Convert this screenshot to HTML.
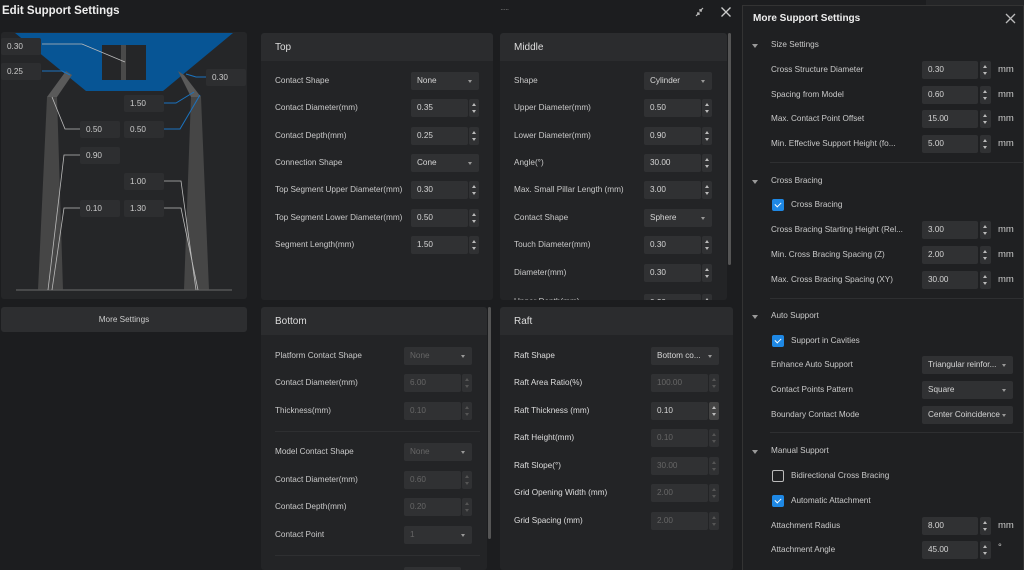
<!DOCTYPE html>
<html><head><meta charset="utf-8"><style>
*{margin:0;padding:0;box-sizing:border-box}
html{width:1024px;height:570px;overflow:hidden;background:#1c1d1f}
body{width:1024px;height:570px;background:#1c1d1f;font-family:"Liberation Sans",sans-serif;color:#c9c9c9;position:relative;overflow:hidden;font-size:8.2px}
div,span{position:absolute}
.p{background:#232426;border-radius:3px;overflow:hidden}
.h{background:#2b2c2e;border-radius:3px 3px 0 0;height:28px;left:0;right:0;top:0;font-size:10px;color:#ddd;padding:9px 0 0 14px}
.l{line-height:12px;white-space:nowrap}
.i{background:#303133;height:18px;border-radius:2px;padding:4px 0 0 6px;color:#d6d6d6;line-height:10px}
.s{background:#303133;height:18px;width:10px;border-radius:2px}
.s:before{content:"";position:absolute;left:3px;top:4px;border:2px solid transparent;border-bottom:3px solid #bbb;border-top:0}
.s:after{content:"";position:absolute;left:3px;top:11px;border:2px solid transparent;border-top:3px solid #bbb;border-bottom:0}
.d{background:#303133;height:18px;border-radius:2px;padding:4px 0 0 6px;color:#d6d6d6;line-height:10px}
.d:after{content:"";position:absolute;right:7px;top:8px;border:2.5px solid transparent;border-top:3px solid #999;border-bottom:0}
.x{color:#666}.x.s:before{border-bottom-color:#555}.x.s:after{border-top-color:#555}
.sep{height:1px;background:#2e2f31}
.cb{width:12px;height:12px;border-radius:2px;background:#1e88e5}
.cb:after{content:"";position:absolute;left:3px;top:3px;width:5px;height:3px;border-left:1.5px solid #fff;border-bottom:1.5px solid #fff;transform:rotate(-45deg)}
.cu{width:12px;height:12px;border-radius:2px;border:1.3px solid #bbb}
.ar{width:0;height:0;border:3px solid transparent;border-top:4px solid #999;border-bottom:0}
.mm{color:#ccc;font-size:9.5px}
.b{background:#2d2e30;border-radius:2px;width:40px;height:17px;color:#ccc;font-size:8.2px;padding:4px 0 0 6px;line-height:10px}
</style></head><body>
<div style="left:2px;top:5px;font-size:11.5px;font-weight:bold;color:#eee">Edit Support Settings</div>
<div style="left:500px;top:5px;color:#777;font-size:8px;letter-spacing:-1px">·····</div>
<svg style="position:absolute;left:694px;top:6px" width="14" height="12"><path d="M9 2 L6 5 M6 3 V5 H8 M2 10 L5 7 M3 7 H5 V9" stroke="#bbb" stroke-width="1.2" fill="none"/></svg>
<svg style="position:absolute;left:720px;top:6px" width="12" height="12"><path d="M1.5 1.5 L10.5 10.5 M10.5 1.5 L1.5 10.5" stroke="#ccc" stroke-width="1.3"/></svg>

<div class="p" style="left:1px;top:32px;width:246px;height:267px;background:#252628"></div>
<svg style="position:absolute;left:0;top:0" width="250" height="300">
<polygon points="15,33 233,33 163,91 86,91" fill="#075595"/>
<rect x="102" y="45" width="44" height="35" fill="#252628"/>
<rect x="121" y="45" width="5" height="35" fill="#4a4a4a"/>
<polygon points="47,97 57,97 63,290 38,290" fill="#464646"/>
<polygon points="47,97 57,97 72,75 66,71" fill="#5a5a5a"/>
<polygon points="191,97 201,97 209,290 184,290" fill="#464646"/>
<polygon points="191,97 201,97 184,75 178,71" fill="#5a5a5a"/>
<line x1="16" y1="290" x2="232" y2="290" stroke="#555" stroke-width="1.5"/>
<g stroke="#1a73c0" fill="none" stroke-width="1">
<path d="M42 71 H62 L70 75"/><path d="M206 77 H196 L186 74"/><path d="M164 103 H176 L194 92"/><path d="M164 129 H180 L200 95"/>
</g>
<g stroke="#bbb" fill="none" stroke-width="0.8">
<path d="M42 44 H82 L125 62"/><path d="M80 129 H65 L52 97"/><path d="M80 155 H64 L48 290"/><path d="M80 208 H64 L52 290"/><path d="M164 181 H181 L196 290"/><path d="M164 208 H181 L198 290"/>
</g>
</svg>
<div class="b" style="left:1px;top:38px">0.30</div>
<div class="b" style="left:1px;top:63px">0.25</div>
<div class="b" style="left:206px;top:69px">0.30</div>
<div class="b" style="left:124px;top:95px">1.50</div>
<div class="b" style="left:80px;top:121px">0.50</div>
<div class="b" style="left:124px;top:121px">0.50</div>
<div class="b" style="left:80px;top:147px">0.90</div>
<div class="b" style="left:124px;top:173px">1.00</div>
<div class="b" style="left:80px;top:200px">0.10</div>
<div class="b" style="left:124px;top:200px">1.30</div>
<div style="left:1px;top:307px;width:246px;height:25px;background:#2d2e30;border-radius:3px;text-align:center;padding-top:8px;color:#ccc">More Settings</div>

<div class="p" style="left:261px;top:33px;width:232px;height:267px"><div class="h">Top</div></div>
<div class="l" style="left:275px;top:75px">Contact Shape</div><div class="d" style="left:411px;top:72px;width:68px">None</div>
<div class="l" style="left:275px;top:102px">Contact Diameter(mm)</div><div class="i" style="left:411px;top:99px;width:57px">0.35</div><div class="s" style="left:469px;top:99px"></div>
<div class="l" style="left:275px;top:130px">Contact Depth(mm)</div><div class="i" style="left:411px;top:127px;width:57px">0.25</div><div class="s" style="left:469px;top:127px"></div>
<div class="l" style="left:275px;top:157px">Connection Shape</div><div class="d" style="left:411px;top:154px;width:68px">Cone</div>
<div class="l" style="left:275px;top:184px">Top Segment Upper Diameter(mm)</div><div class="i" style="left:411px;top:181px;width:57px">0.30</div><div class="s" style="left:469px;top:181px"></div>
<div class="l" style="left:275px;top:212px">Top Segment Lower Diameter(mm)</div><div class="i" style="left:411px;top:209px;width:57px">0.50</div><div class="s" style="left:469px;top:209px"></div>
<div class="l" style="left:275px;top:239px">Segment Length(mm)</div><div class="i" style="left:411px;top:236px;width:57px">1.50</div><div class="s" style="left:469px;top:236px"></div>

<div class="p" style="left:500px;top:33px;width:227px;height:267px"><div class="h">Middle</div>
<div class="l" style="left:14px;top:263px">Upper Depth(mm)</div><div class="i" style="left:144px;top:261px;width:57px">0.20</div><div class="s" style="left:202px;top:261px"></div></div>
<div style="left:728px;top:33px;width:3px;height:232px;background:#555;border-radius:2px"></div>
<div class="l" style="left:514px;top:75px">Shape</div><div class="d" style="left:644px;top:72px;width:68px">Cylinder</div>
<div class="l" style="left:514px;top:102px">Upper Diameter(mm)</div><div class="i" style="left:644px;top:99px;width:57px">0.50</div><div class="s" style="left:702px;top:99px"></div>
<div class="l" style="left:514px;top:130px">Lower Diameter(mm)</div><div class="i" style="left:644px;top:127px;width:57px">0.90</div><div class="s" style="left:702px;top:127px"></div>
<div class="l" style="left:514px;top:157px">Angle(°)</div><div class="i" style="left:644px;top:154px;width:57px">30.00</div><div class="s" style="left:702px;top:154px"></div>
<div class="l" style="left:514px;top:184px">Max. Small Pillar Length (mm)</div><div class="i" style="left:644px;top:181px;width:57px">3.00</div><div class="s" style="left:702px;top:181px"></div>
<div class="l" style="left:514px;top:212px">Contact Shape</div><div class="d" style="left:644px;top:209px;width:68px">Sphere</div>
<div class="l" style="left:514px;top:239px">Touch Diameter(mm)</div><div class="i" style="left:644px;top:236px;width:57px">0.30</div><div class="s" style="left:702px;top:236px"></div>
<div class="l" style="left:514px;top:267px">Diameter(mm)</div><div class="i" style="left:644px;top:264px;width:57px">0.30</div><div class="s" style="left:702px;top:264px"></div>

<div class="p" style="left:261px;top:307px;width:226px;height:263px"><div class="h">Bottom</div>
<div class="i x" style="left:143px;top:260px;width:57px"></div></div>
<div style="left:488px;top:307px;width:3px;height:232px;background:#555;border-radius:2px"></div>
<div class="l" style="left:275px;top:350px">Platform Contact Shape</div><div class="d x" style="left:404px;top:347px;width:68px">None</div>
<div class="l" style="left:275px;top:377px">Contact Diameter(mm)</div><div class="i x" style="left:404px;top:374px;width:57px">6.00</div><div class="s x" style="left:462px;top:374px"></div>
<div class="l" style="left:275px;top:405px">Thickness(mm)</div><div class="i x" style="left:404px;top:402px;width:57px">0.10</div><div class="s x" style="left:462px;top:402px"></div>
<div class="sep" style="left:275px;top:431px;width:205px"></div>
<div class="l" style="left:275px;top:446px">Model Contact Shape</div><div class="d x" style="left:404px;top:443px;width:68px">None</div>
<div class="l" style="left:275px;top:474px">Contact Diameter(mm)</div><div class="i x" style="left:404px;top:471px;width:57px">0.60</div><div class="s x" style="left:462px;top:471px"></div>
<div class="l" style="left:275px;top:501px">Contact Depth(mm)</div><div class="i x" style="left:404px;top:498px;width:57px">0.20</div><div class="s x" style="left:462px;top:498px"></div>
<div class="l" style="left:275px;top:529px">Contact Point</div><div class="d x" style="left:404px;top:526px;width:68px">1</div>
<div class="sep" style="left:275px;top:555px;width:205px"></div>

<div class="p" style="left:500px;top:307px;width:233px;height:263px"><div class="h">Raft</div></div>
<div class="l" style="left:514px;top:350px;color:#ddd">Raft Shape</div><div class="d" style="left:651px;top:347px;width:68px">Bottom co...</div>
<div class="l" style="left:514px;top:377px;color:#ddd">Raft Area Ratio(%)</div><div class="i x" style="left:651px;top:374px;width:57px">100.00</div><div class="s x" style="left:709px;top:374px"></div>
<div class="l" style="left:514px;top:405px;color:#ddd">Raft Thickness (mm)</div><div class="i" style="left:651px;top:402px;width:57px">0.10</div><div class="s" style="left:709px;top:402px;background:#444"></div>
<div class="l" style="left:514px;top:432px;color:#ddd">Raft Height(mm)</div><div class="i x" style="left:651px;top:429px;width:57px">0.10</div><div class="s x" style="left:709px;top:429px"></div>
<div class="l" style="left:514px;top:460px;color:#ddd">Raft Slope(°)</div><div class="i x" style="left:651px;top:457px;width:57px">30.00</div><div class="s x" style="left:709px;top:457px"></div>
<div class="l" style="left:514px;top:487px;color:#ddd">Grid Opening Width (mm)</div><div class="i x" style="left:651px;top:484px;width:57px">2.00</div><div class="s x" style="left:709px;top:484px"></div>
<div class="l" style="left:514px;top:515px;color:#ddd">Grid Spacing (mm)</div><div class="i x" style="left:651px;top:512px;width:57px">2.00</div><div class="s x" style="left:709px;top:512px"></div>

<div style="left:742px;top:5px;width:282px;height:565px;background:#1f2022;border:1px solid #333;border-bottom:0"></div>
<div style="left:926px;top:0;width:98px;height:5px;background:#242527"></div>
<div style="left:753px;top:13px;font-size:10px;font-weight:bold;color:#eee">More Support Settings</div>
<svg style="position:absolute;left:1005px;top:13px" width="11" height="11"><path d="M1 1 L10 10 M10 1 L1 10" stroke="#bbb" stroke-width="1.3"/></svg>

<div class="ar" style="left:752px;top:44px"></div><div class="l" style="left:771px;top:39px">Size Settings</div>
<div class="l" style="left:771px;top:64px">Cross Structure Diameter</div><div class="i" style="left:922px;top:61px;width:56px">0.30</div><div class="s" style="left:980px;top:61px;width:11px"></div><div class="l mm" style="left:998px;top:64px">mm</div>
<div class="l" style="left:771px;top:89px">Spacing from Model</div><div class="i" style="left:922px;top:86px;width:56px">0.60</div><div class="s" style="left:980px;top:86px;width:11px"></div><div class="l mm" style="left:998px;top:89px">mm</div>
<div class="l" style="left:771px;top:113px">Max. Contact Point Offset</div><div class="i" style="left:922px;top:110px;width:56px">15.00</div><div class="s" style="left:980px;top:110px;width:11px"></div><div class="l mm" style="left:998px;top:113px">mm</div>
<div class="l" style="left:771px;top:138px">Min. Effective Support Height (fo...</div><div class="i" style="left:922px;top:135px;width:56px">5.00</div><div class="s" style="left:980px;top:135px;width:11px"></div><div class="l mm" style="left:998px;top:138px">mm</div>
<div class="sep" style="left:770px;top:162px;width:254px"></div>

<div class="ar" style="left:752px;top:180px"></div><div class="l" style="left:771px;top:175px">Cross Bracing</div>
<div class="cb" style="left:772px;top:199px"></div><div class="l" style="left:791px;top:199px">Cross Bracing</div>
<div class="l" style="left:771px;top:224px">Cross Bracing Starting Height (Rel...</div><div class="i" style="left:922px;top:221px;width:56px">3.00</div><div class="s" style="left:980px;top:221px;width:11px"></div><div class="l mm" style="left:998px;top:224px">mm</div>
<div class="l" style="left:771px;top:249px">Min. Cross Bracing Spacing (Z)</div><div class="i" style="left:922px;top:246px;width:56px">2.00</div><div class="s" style="left:980px;top:246px;width:11px"></div><div class="l mm" style="left:998px;top:249px">mm</div>
<div class="l" style="left:771px;top:274px">Max. Cross Bracing Spacing (XY)</div><div class="i" style="left:922px;top:271px;width:56px">30.00</div><div class="s" style="left:980px;top:271px;width:11px"></div><div class="l mm" style="left:998px;top:274px">mm</div>
<div class="sep" style="left:770px;top:298px;width:254px"></div>

<div class="ar" style="left:752px;top:315px"></div><div class="l" style="left:771px;top:310px">Auto Support</div>
<div class="cb" style="left:772px;top:335px"></div><div class="l" style="left:791px;top:335px">Support in Cavities</div>
<div class="l" style="left:771px;top:359px">Enhance Auto Support</div><div class="d" style="left:922px;top:356px;width:91px">Triangular reinfor...</div>
<div class="l" style="left:771px;top:384px">Contact Points Pattern</div><div class="d" style="left:922px;top:381px;width:91px">Square</div>
<div class="l" style="left:771px;top:409px">Boundary Contact Mode</div><div class="d" style="left:922px;top:406px;width:91px">Center Coincidence</div>
<div class="sep" style="left:770px;top:432px;width:254px"></div>

<div class="ar" style="left:752px;top:450px"></div><div class="l" style="left:771px;top:445px">Manual Support</div>
<div class="cu" style="left:772px;top:470px"></div><div class="l" style="left:791px;top:470px">Bidirectional Cross Bracing</div>
<div class="cb" style="left:772px;top:495px"></div><div class="l" style="left:791px;top:495px">Automatic Attachment</div>
<div class="l" style="left:771px;top:520px">Attachment Radius</div><div class="i" style="left:922px;top:517px;width:56px">8.00</div><div class="s" style="left:980px;top:517px;width:11px"></div><div class="l mm" style="left:998px;top:520px">mm</div>
<div class="l" style="left:771px;top:544px">Attachment Angle</div><div class="i" style="left:922px;top:541px;width:56px">45.00</div><div class="s" style="left:980px;top:541px;width:11px"></div><div class="l mm" style="left:998px;top:542px">°</div>
</body></html>
